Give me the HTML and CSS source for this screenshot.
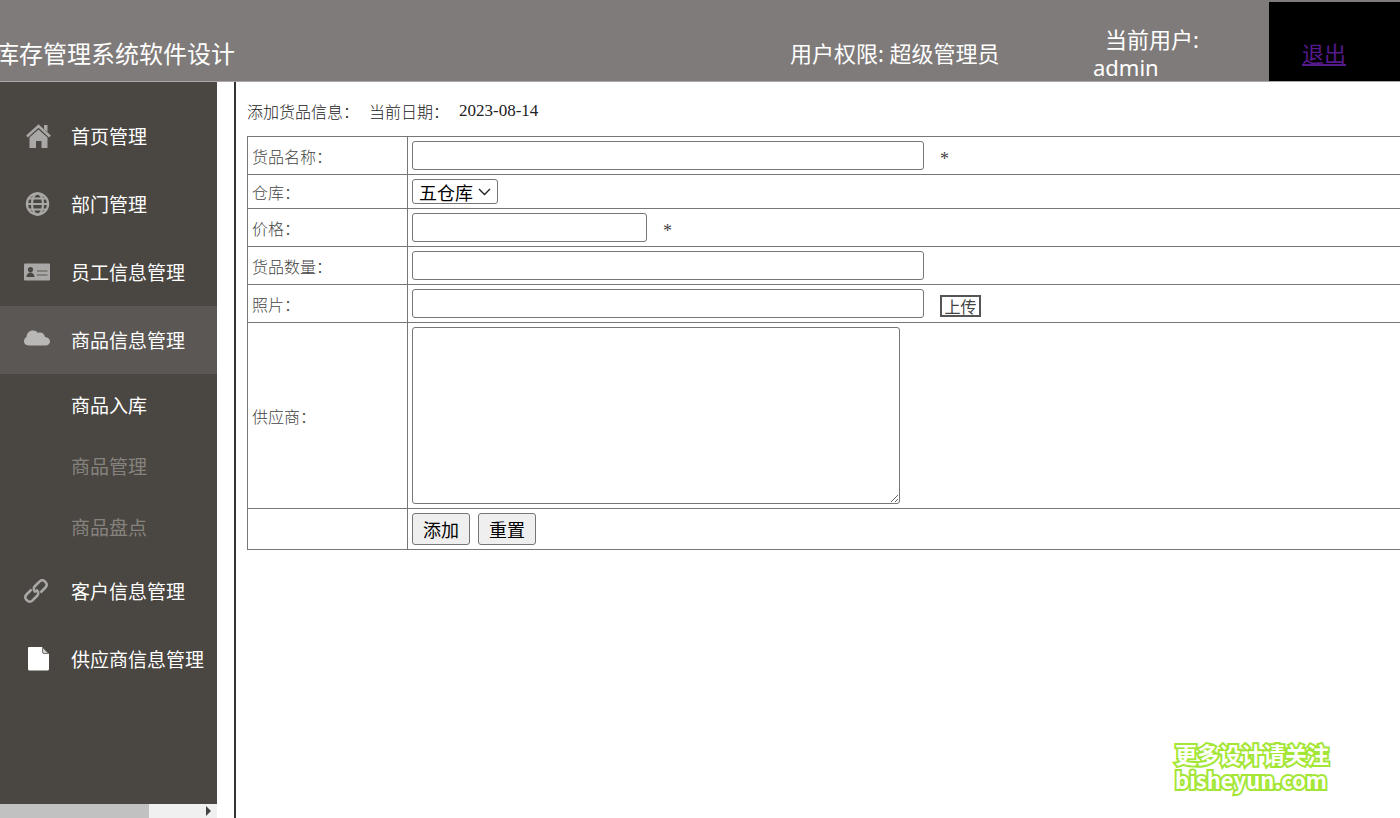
FILE: index.html
```html
<!DOCTYPE html>
<html lang="zh-CN">
<head>
<meta charset="utf-8">
<title>库存管理系统软件设计</title>
<link rel="stylesheet" href="styles.css">
</head>
<body>
<header class="topbar">
  <h1 class="title">库存管理系统软件设计</h1>
  <p class="role">用户权限: 超级管理员</p>
  <p class="user"><span class="user-label">当前用户:</span><span>admin</span></p>
  <div class="exit"><a href="#">退出</a></div>
</header>
<div class="body">
  <aside class="sidebar">
    <nav class="nav">
      <a class="item" href="#">
        <svg class="icon" viewBox="0 0 26 26"><path d="M3 13.500 14.500 3 26 13.500" fill="none" stroke="#aaa8a6" stroke-width="2.600"/><path d="M20 2h3.500v7L20 6zM5.500 14.500l9-8 9 8V25h-6v-7h-5.500v7H5.500z" fill="#aaa8a6"/></svg>
        首页管理</a>
      <a class="item" href="#">
        <svg class="icon" viewBox="0 0 26 26" fill="none" stroke="#aaa8a6" stroke-width="2.200"><circle cx="13.500" cy="13" r="10.600"/><ellipse cx="13.500" cy="13" rx="5.500" ry="10.600"/><path d="M3 13h21M5 7.500h17M5 18.500h17" stroke-width="1.800"/></svg>
        部门管理</a>
      <a class="item" href="#">
        <svg class="icon" viewBox="0 0 26 26"><rect y="4.500" width="26" height="17" rx="1" fill="#aaa8a6"/><circle cx="6.500" cy="10.500" r="2.600" fill="#4a4641"/><path d="M2.500 18c0-3 2-3.500 3-4.500h2c1 1 3 1.500 3 4.500z" fill="#4a4641"/><path d="M13 12h10.500M13 16h10.500" stroke="#77736f" stroke-width="1.300"/></svg>
        员工信息管理</a>
      <a class="item active" href="#">
        <svg class="icon" viewBox="0 0 26 26"><path d="M5 18.500C1.500 18.500 0 16.500 0 14.300c0-2 1-3.500 2.500-4.300C2.800 6 5.500 3.500 9 3.500c2.400 0 4 1 5 2.500 3-1.500 6.500.500 7 4 3 .300 5 2 5 4.500 0 2.200-1.700 4-4.500 4z" fill="#bab8b6"/></svg>
        商品信息管理</a>
      <a class="subitem current" href="#">商品入库</a>
      <a class="subitem" href="#">商品管理</a>
      <a class="subitem" href="#">商品盘点</a>
      <a class="item" href="#">
        <svg class="icon" viewBox="0 0 26 26"><g transform="translate(12 13) rotate(-45)" fill="none" stroke="#aaa8a6" stroke-width="2.600"><path d="M-2 -4.200H-9.500a3.500 3.500 0 0 0-3.500 3.500V.700a3.500 3.500 0 0 0 3.500 3.500H-2.500a3.500 3.500 0 0 0 3.500-3.500V-1"/><path d="M2 4.200H9.500a3.500 3.500 0 0 0 3.500-3.500V-.700a3.500 3.500 0 0 0-3.500-3.500H2.500a3.500 3.500 0 0 0-3.500 3.500V1"/></g></svg>
        客户信息管理</a>
      <a class="item" href="#">
        <svg class="icon" viewBox="0 0 26 26"><path d="M5 1h13l7 7v15a1.500 1.500 0 0 1-1.500 1.500H5.500A1.500 1.500 0 0 1 4 23V2a1 1 0 0 1 1-1z" fill="#fff"/><path d="M18.500 1.500V6A1.500 1.500 0 0 0 20 7.500h4.500z" fill="#d0cecc" stroke="#77736f"/></svg>
        供应商信息管理</a>
    </nav>
    <div class="scrollbar"><span class="thumb"></span><svg class="arrow" viewBox="0 0 5 10"><path d="M0 0 5 5 0 10z" fill="#444"/></svg></div>
  </aside>
  <main class="main">
    <p class="heading"><span>添加货品信息：</span><span>当前日期：</span><span class="date">2023-08-14</span></p>
    <form>
      <table class="form-table">
        <colgroup><col class="label-col"><col></colgroup>
        <tr><td><label for="name">货品名称：</label></td><td><div class="field"><input id="name" class="long" type="text"><span class="star">*</span></div></td></tr>
        <tr><td><label for="store">仓库：</label></td><td><div class="field"><select id="store"><option>五仓库</option></select></div></td></tr>
        <tr><td><label for="price">价格：</label></td><td><div class="field"><input id="price" class="short" type="text"><span class="star">*</span></div></td></tr>
        <tr><td><label for="count">货品数量：</label></td><td><div class="field"><input id="count" class="long" type="text"></div></td></tr>
        <tr><td><label for="photo">照片：</label></td><td><div class="field"><input id="photo" class="long" type="text"><button class="upload" type="button">上传</button></div></td></tr>
        <tr><td><label for="supplier">供应商：</label></td><td><textarea id="supplier"></textarea></td></tr>
        <tr><td></td><td><div class="actions"><button type="submit">添加</button><button type="reset">重置</button></div></td></tr>
      </table>
    </form>
  </main>
</div>
<p class="watermark"><span>更多设计请关注</span><span>bisheyun.com</span></p>
</body>
</html>
```
FILE: styles.css
```css
* { box-sizing: border-box; }
body {
  margin: 0;
  height: 100vh;
  display: flex;
  flex-direction: column;
  overflow: hidden;
  background: #fff;
  font-family: "Noto Sans", "Noto Sans CJK SC", sans-serif;
}
p, h1 { margin: 0; }

.topbar {
  flex: none;
  display: flex;
  height: 82px;
  border-bottom: 1px solid #aaa7a6;
  background: #7f7b7a;
  color: #fff;
  font-size: 22px;
  line-height: 28px;
}
.title {
  width: 235px;
  display: flex;
  justify-content: flex-end;
  padding-top: 40px;
  font-size: 24px;
  font-weight: 400;
  white-space: nowrap;
}
.role { margin-left: auto; padding-top: 39px; width: 303px; white-space: nowrap; }
.user { display: flex; flex-direction: column; width: 176px; padding-top: 25px; }
.user-label { padding-left: 12px; }
.exit {
  width: 131px;
  margin-top: 2px;
  padding: 37px 0 0 33px;
  background: #000;
}
.exit a { color: #551a8b; }

.body { flex: 1; min-height: 0; display: flex; }
.sidebar {
  flex: none;
  width: 217px;
  display: flex;
  flex-direction: column;
  background: #4a4641;
}
.nav { flex: 1; padding-top: 20px; }
.item, .subitem {
  display: flex;
  align-items: center;
  color: #fff;
  font-size: 19px;
  text-decoration: none;
  white-space: nowrap;
}
.item { height: 68px; gap: 21px; padding-left: 24px; }
.active { background: #5b5754; }
.subitem { height: 61px; padding-left: 71px; color: #86837f; }
.current { color: #fff; }
.icon { flex: none; width: 26px; height: 26px; overflow: visible; }
.scrollbar {
  height: 14px;
  display: flex;
  align-items: center;
  justify-content: space-between;
  padding-right: 6px;
  background: #f0f0f0;
}
.thumb { width: 149px; height: 14px; background: #c1c1c1; }
.arrow { width: 5px; height: 10px; }

.main {
  flex: 1;
  min-width: 0;
  margin-left: 17px;
  padding: 17px 0 0 11px;
  border-left: 2px solid #333;
  color: #444;
  font-family: "Noto Sans CJK SC", sans-serif;
  font-size: 16px;
  font-weight: 300;
  line-height: 24px;
}
.heading { display: flex; gap: 10px; margin-bottom: 13px; color: #222; }
.date { font-family: "Liberation Serif", serif; font-size: 17px; }
.form-table {
  width: calc(100% + 8px);
  table-layout: fixed;
  border-collapse: collapse;
}
.label-col { width: 160px; }
td { border: 1px solid #777; padding: 4px; height: 34px; }
.field { display: flex; align-items: center; gap: 16px; }
.star { padding-top: 6px; font: 18px/22px "Liberation Serif", serif; }
input, textarea, select {
  border: 1px solid #767676;
  border-radius: 3px;
  background: #fff;
}
input { height: 29px; }
.long { width: 512px; }
.short { width: 235px; }
select {
  appearance: none;
  width: 86px;
  height: 25px;
  padding: 0 20px 0 6px;
  color: #000;
  font: 18px/22px "Noto Sans CJK SC", sans-serif;
  background: #fff url("data:image/svg+xml,%3Csvg xmlns='http://www.w3.org/2000/svg' width='13' height='8' viewBox='0 0 13 8'%3E%3Cpath d='M1 1l5.500 5.500L12 1' fill='none' stroke='%23222' stroke-width='1.400'/%3E%3C/svg%3E") no-repeat right 6px center;
}
textarea { display: block; width: 488px; height: 177px; }
.upload {
  width: 41px;
  height: 22px;
  margin-top: 4px;
  padding: 0;
  border: 2px solid #555;
  background: #fff;
  color: #444;
  font: 16px/16px "Noto Sans CJK SC", sans-serif;
}
.actions { display: flex; gap: 8px; }
.actions button {
  width: 58px;
  height: 32px;
  padding: 0;
  border: 1px solid #767676;
  border-radius: 3px;
  background: #efefef;
  color: #000;
  font: 18px "Noto Sans CJK SC", sans-serif;
}

.watermark {
  position: absolute;
  right: 71px;
  bottom: 26px;
  display: flex;
  flex-direction: column;
  color: #fff;
  font: bold 22px/26px "Noto Sans CJK SC", sans-serif;
  -webkit-text-stroke: 4px #a3e635;
  paint-order: stroke fill;
}
```
